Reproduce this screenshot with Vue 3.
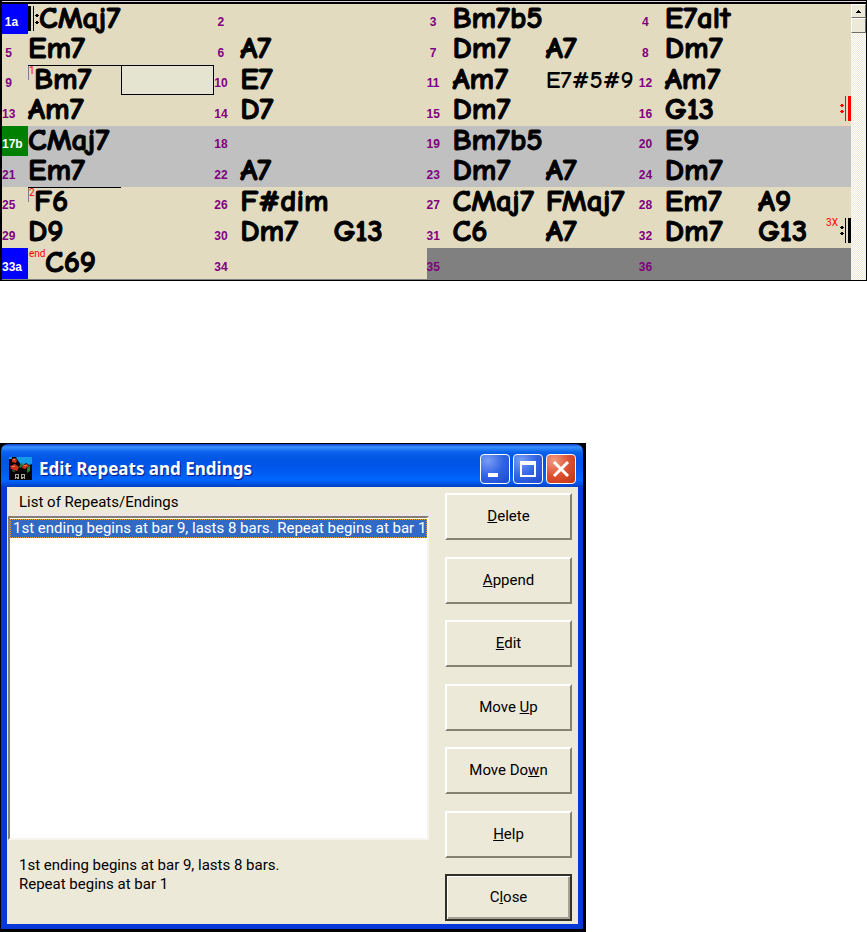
<script setup>
import { ref } from 'vue'

const rows = [
  { tone: 'plain', bars: [
    { n: '1a', mark: 'blue', open: true, c: ['CMaj7'] }, { n: '2', c: [] }, { n: '3', c: ['Bm7b5'] }, { n: '4', c: ['E7alt'] }] },
  { tone: 'plain', bars: [
    { n: '5', c: ['Em7'] }, { n: '6', c: ['A7'] }, { n: '7', c: ['Dm7', 'A7'] }, { n: '8', c: ['Dm7'] }] },
  { tone: 'plain', bars: [
    { n: '9', ending: '1', c: ['Bm7'], cursor: true }, { n: '10', c: ['E7'] }, { n: '11', c: ['Am7', 'E7#5#9'] }, { n: '12', c: ['Am7'] }] },
  { tone: 'plain', bars: [
    { n: '13', c: ['Am7'] }, { n: '14', c: ['D7'] }, { n: '15', c: ['Dm7'] }, { n: '16', c: ['G13'], close: 'red' }] },
  { tone: 'chorus', bars: [
    { n: '17b', mark: 'green', c: ['CMaj7'] }, { n: '18', c: [] }, { n: '19', c: ['Bm7b5'] }, { n: '20', c: ['E9'] }] },
  { tone: 'chorus', bars: [
    { n: '21', c: ['Em7'] }, { n: '22', c: ['A7'] }, { n: '23', c: ['Dm7', 'A7'] }, { n: '24', c: ['Dm7'] }] },
  { tone: 'plain', bars: [
    { n: '25', ending: '2', c: ['F6'] }, { n: '26', c: ['F#dim'] }, { n: '27', c: ['CMaj7', 'FMaj7'] }, { n: '28', c: ['Em7', 'A9'] }] },
  { tone: 'plain', bars: [
    { n: '29', c: ['D9'] }, { n: '30', c: ['Dm7', 'G13'] }, { n: '31', c: ['C6', 'A7'] }, { n: '32', c: ['Dm7', 'G13'], close: 'black', times: '3X' }] },
  { tone: 'plain', bars: [
    { n: '33a', mark: 'blue', end: 'end', c: ['C69'] }, { n: '34', c: [] }, { n: '35', off: true, c: [] }, { n: '36', off: true, c: [] }] },
]

const selected = ref('r1')
const actions = [
  ['', 'D', 'elete'],
  ['', 'A', 'ppend'],
  ['', 'E', 'dit'],
  ['Move ', 'U', 'p'],
  ['Move Do', 'w', 'n'],
  ['', 'H', 'elp'],
  ['C', 'l', 'ose'],
]
</script>

<template>
  <main class="page">
    <section class="sheet" aria-label="Chord sheet">
      <div class="chart">
        <div v-for="(row, r) in rows" :key="r" class="row" :class="row.tone">
          <div v-for="bar in row.bars" :key="bar.n" class="bar" :class="{ off: bar.off }">
            <div class="num" :class="bar.mark"><span>{{ bar.n }}</span></div>
            <div class="beat" :class="{ ending: bar.ending }">
              <svg v-if="bar.open" class="open" viewBox="0 0 11 25" aria-hidden="true">
                <path d="M0 0h3v25H0zM5 0h1v25H5zM8 8h2v1h1v1h-1v1H8v-1H7V9h1zM8 15h2v1h1v1h-1v1H8v-1H7v-1h1z" />
              </svg>
              <span v-if="bar.ending" class="tag">{{ bar.ending }}</span>
              <span v-if="bar.end" class="tag wide">{{ bar.end }}</span>
              <span v-if="bar.c[0]" class="chord">{{ bar.c[0] }}</span>
            </div>
            <div class="beat" :class="{ cursor: bar.cursor }">
              <span v-if="bar.c[1]" class="chord" :class="{ small: bar.c[1].length > 5 }">{{ bar.c[1] }}</span>
              <span v-if="bar.close" class="repeat">
                <span v-if="bar.times" class="times">{{ bar.times }}</span>
                <svg class="close" :class="bar.close" viewBox="0 0 11 25" aria-hidden="true">
                  <path d="M8 0h3v25H8zM5 0h1v25H5zM0 9h1V8h2v1h1v1H3v1H1v-1H0zM0 15h1v-1h2v1h1v1H3v1H1v-1H0z" />
                </svg>
              </span>
            </div>
          </div>
        </div>
      </div>
      <div class="scroll">
        <button class="arrow" type="button" aria-label="Scroll up">
          <svg viewBox="0 0 5 3" aria-hidden="true"><path d="M2 0h1v1h1v1h1v1H0V2h1V1h1z" /></svg>
        </button>
        <div class="thumb"></div>
      </div>
    </section>

    <section class="dialog" aria-labelledby="dlg-title">
      <header class="titlebar">
        <svg class="logo" viewBox="0 0 23 23" aria-hidden="true">
          <path fill="#050505" d="M0 0h23v23H0z" />
          <path fill="#119be8" d="M7 0h16v7l-3 1-3-2-4 3-3-4-2-3zM0 0h3v2H0z" />
          <path fill="#c83420" d="M3 2l3-1 2 2-1 3-4-1zM1 9l5-2 4 3-2 4-6-2zM14 8l4-1 2 2-4 3-3-1z" />
          <path fill="#e8803a" d="M4 2h2v1H4zM15 8h3v1h-3zM3 9h3v1H3z" />
          <path fill="#2d7a35" d="M12 6l2 1-2 4-2-1zM18 11l3-3v6l-3 2zM3 13l4 1-3 1z" />
          <path fill="#a8a890" d="M6 17h4v5H6zM12 17h4v5h-4z" />
          <path fill="#111" d="M7 18h2v2H7zM13 18h2v2h-2zM7 21h1v1H7zM14 21h1v1h-1z" />
        </svg>
        <h1 id="dlg-title">Edit Repeats and Endings</h1>
        <div class="winbtns">
          <button type="button" aria-label="Minimize">
            <svg viewBox="0 0 26 26" aria-hidden="true"><path fill="#fff" d="M6 17h10v4H6z" /></svg>
          </button>
          <button type="button" aria-label="Maximize">
            <svg viewBox="0 0 26 26" aria-hidden="true"><path fill="#fff" fill-rule="evenodd" d="M5 5h16v16H5zM7 9v10h12V9z" /></svg>
          </button>
          <button type="button" class="x" aria-label="Close window">
            <svg viewBox="0 0 26 26" aria-hidden="true"><path fill="none" stroke="#fff" stroke-width="3" d="M6 6l14 14M20 6L6 20" /></svg>
          </button>
        </div>
      </header>
      <div class="body">
        <div class="left">
          <label for="repeats">List of Repeats/Endings</label>
          <select id="repeats" v-model="selected" size="4">
            <option value="r1">1st ending begins at bar 9, lasts 8 bars. Repeat begins at bar 1</option>
          </select>
          <p>1st ending begins at bar 9, lasts 8 bars.<br>Repeat begins at bar 1</p>
        </div>
        <div class="actions">
          <button v-for="a in actions" :key="a.join('')" type="button" :class="{ primary: a[2] === 'ose' }"><span>{{ a[0] }}<u>{{ a[1] }}</u>{{ a[2] }}</span></button>
        </div>
      </div>
    </section>
  </main>
</template>

<style>
body { background: #fff; }
</style>

<style scoped>
* { box-sizing: border-box; }
.page {
  display: flex;
  flex-direction: column;
  align-items: flex-start;
  gap: 162px;
  font-family: Roboto, "Liberation Sans", sans-serif;
  color: #000;
}
.sheet {
  display: grid;
  grid-template-columns: 1fr 15px;
  align-self: stretch;
  background: #e3dbc0;
  border: solid #000;
  border-width: 0 1px 1px 2px;
}
.sheet::before {
  content: "";
  grid-column: 1 / -1;
  height: 4px;
  background: linear-gradient(#000 1px, #dccfd6 1px 2px, #000 2px);
}
.chart {
  display: grid;
  grid-template-rows: repeat(4, 30px 31px) 31px;
  border-bottom: 1px solid #808080;
}
.row { display: grid; grid-template-columns: repeat(4, minmax(0, 1fr)); }
.row.chorus { background: #c0c0c0; }
.bar { display: grid; grid-template-columns: 26px minmax(0, 1fr) minmax(0, 1fr); }
.bar.off { background: #808080; }
.num {
  display: flex;
  align-items: flex-end;
  padding-bottom: 5px;
  color: #800080;
  font: bold 12px/14px "Liberation Sans", sans-serif;
}
.num span { min-width: 13px; text-align: center; }
.num.blue { background: #00f; color: #fff; }
.num.green { background: #008000; color: #fff; }
.num.blue span, .num.green span { min-width: 19px; }
.beat {
  display: flex;
  align-items: flex-start;
  min-width: 0;
  border-top: 1px solid transparent;
}
.beat.ending { border-top-color: #000; }
.ending .tag { border-left: 1px solid #808080; height: 14px; }
.tag { color: #f00; font-size: 10px; line-height: 10px; width: 6px; }
.tag.wide { width: 17px; padding-left: 1px; }
.cursor { border: 1px solid #000; background: #e5e4d0; }
.chord {
  font: bold 31px/26px "Comic Sans MS", "Comic Neue", Lato, sans-serif;
  -webkit-text-stroke: 1px #000;
  white-space: nowrap;
}
.chord.small { font-size: 25px; line-height: 28px; -webkit-text-stroke: 0; }
.open { width: 11px; height: 25px; margin-top: 1px; }
.repeat { display: flex; margin-left: auto; }
.close { width: 11px; height: 25px; }
.close.red { fill: #f00; }
.times { color: #f00; font-size: 10px; line-height: 10px; padding-right: 2px; }
.scroll {
  background: repeating-conic-gradient(#fff 0 25%, #ece9d8 0 50%) 0 0 / 2px 2px;
}
.arrow, .thumb {
  display: grid;
  place-items: center;
  width: 100%;
  padding: 0;
  background: #ece9d8;
  border: 1px solid;
  border-color: #fff #716f64 #716f64 #fff;
}
.arrow { height: 14px; }
.arrow svg { width: 5px; height: 3px; }
.thumb { height: 15px; }

.dialog {
  width: 586px;
  max-width: 100%;
  border: solid #000;
  border-width: 1px 3px 3px 1px;
  background: #000;
}
.titlebar {
  display: flex;
  align-items: center;
  height: 43px;
  padding: 6px 7px 0 8px;
  border-radius: 7px 7px 0 0;
  background: linear-gradient(#0a3cc8 0, #3a92ff 3px, #0a62ee 8px, #0054e3 16px, #0058ee 26px, #0066ff 36px, #0050e0 40px, #0040c0 43px);
}
.logo { width: 23px; height: 23px; }
h1 {
  flex: 1;
  margin: 0 0 0 7px;
  color: #fff;
  font: bold 17px/24px "Noto Sans", sans-serif;
  text-shadow: 1px 1px 1px #0a1883;
}
.winbtns { display: flex; gap: 3px; }
.winbtns button {
  width: 30px;
  height: 30px;
  padding: 1px;
  border: 1px solid #fff;
  border-radius: 4px;
  background: radial-gradient(circle at 25% 20%, #7a9cf4, #3264e4 50%, #1c48cc);
}
.winbtns button.x { background: radial-gradient(circle at 25% 20%, #f09c80, #dc5030 50%, #c03410); }
.winbtns svg { display: block; width: 26px; height: 26px; }
.body {
  display: grid;
  grid-template-columns: minmax(0, 1fr) 127px;
  gap: 16px;
  min-height: 442px;
  padding: 6px 6px 3px 1px;
  border: solid #0838d8;
  border-width: 0 5px 5px 6px;
  background: #ece9d8;
  font-size: 15px;
  line-height: 19px;
}
.left { display: flex; flex-direction: column; min-width: 0; }
label { padding-left: 11px; }
select {
  flex: 1;
  margin-top: 4px;
  padding: 1px 0;
  border: 2px solid;
  border-color: #808074 #f6f4ec #f6f4ec #808074;
  border-radius: 0;
  outline: none;
  background: #fff;
  font: inherit;
  overflow: hidden;
}
option { height: 19px; min-height: 19px; padding: 0 3px; overflow: hidden; text-overflow: clip; white-space: nowrap; }
option:checked {
  background: linear-gradient(#316ac5, #316ac5);
  outline: 1px dotted #e8a030;
  outline-offset: -1px;
  -webkit-text-fill-color: #fff;
}
p { height: 65px; margin: 16px 0 0; padding-left: 11px; }
.actions { display: flex; flex-direction: column; justify-content: space-between; }
.actions button {
  height: 47px;
  padding: 0;
  border: 2px solid;
  border-color: #fff #858274 #858274 #fff;
  background: #ece9d8;
  color: #000;
  font: inherit;
}
.actions .primary { border: 2px solid #333027; box-shadow: inset 1px 1px #fff, inset -2px -2px #a5a294; }
</style>
